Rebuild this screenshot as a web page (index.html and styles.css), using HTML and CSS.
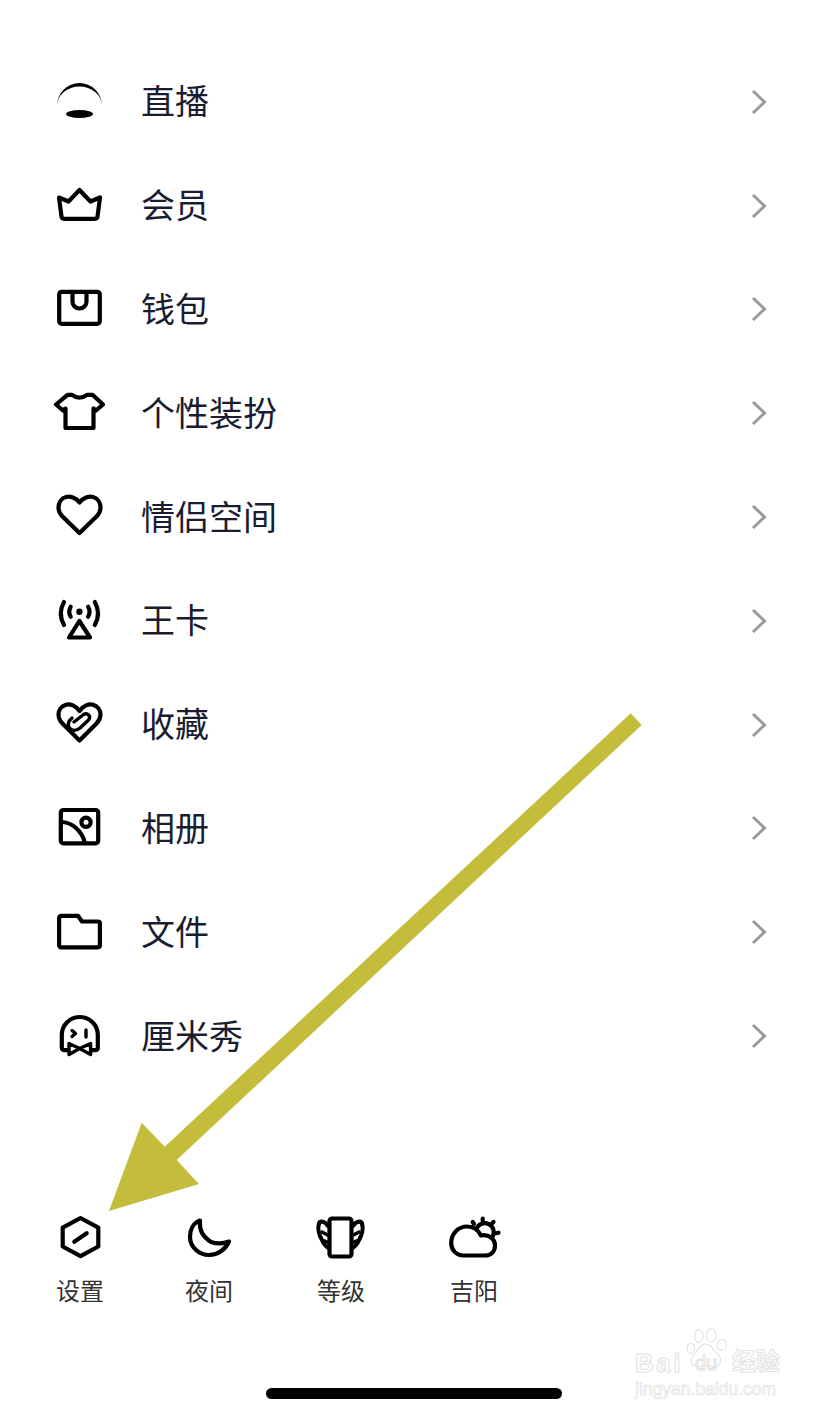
FILE: index.html
```html
<!DOCTYPE html>
<html lang="zh-CN">

<head>
    <meta charset="utf-8">
    <meta name="viewport" content="width=device-width, initial-scale=1.0">
    <title>侧边菜单</title>
    <link rel="stylesheet" href="styles.css">
</head>

<body>
    <div class="page">
        <ul class="menu">
            <li class="row">
                <svg class="icon" viewBox="0 0 48 48"><path class="fill" d="M1.3 27A22.2 22 0 0 1 45.7 27A22.2 18.4 0 0 0 1.3 27Z"/><ellipse class="fill" cx="23.5" cy="36" rx="13.5" ry="4"/></svg>
                <span class="name">直播</span>
                <svg class="more" viewBox="0 0 16 26"><path d="M2 2L13.5 13L2 24"/></svg>
            </li>
            <li class="row">
                <svg class="icon" viewBox="0 0 48 48"><path d="M23.5 8L34.5 19.5L44 15.5L41.5 34.5Q41.2 36.8 39 36.8H8Q5.8 36.8 5.5 34.5L3 15.5L12.5 19.5Z"/></svg>
                <span class="name">会员</span>
                <svg class="more" viewBox="0 0 16 26"><path d="M2 2L13.5 13L2 24"/></svg>
            </li>
            <li class="row">
                <svg class="icon" viewBox="0 0 48 48"><rect x="3.2" y="6.8" width="40.6" height="32" rx="2.5"/><path d="M16.5 7V16.5a7 7 0 0 0 14 0V7"/></svg>
                <span class="name">钱包</span>
                <svg class="more" viewBox="0 0 16 26"><path d="M2 2L13.5 13L2 24"/></svg>
            </li>
            <li class="row">
                <svg class="icon" viewBox="0 0 48 48"><path d="M11.5 5.8H16Q23.5 11.5 31 5.8H36.5L47 15.5L40 21.5L37.5 19.5V39H9.5V19.5L7 21.5L0 15.5Z"/></svg>
                <span class="name">个性装扮</span>
                <svg class="more" viewBox="0 0 16 26"><path d="M2 2L13.5 13L2 24"/></svg>
            </li>
            <li class="row">
                <svg class="icon" viewBox="0 0 48 48"><path d="M23.5 9.5C20 4.5 14 3 10 4C5 5.3 2.5 10 2.5 14.5C2.5 18 4 21 6.5 23.5L23.5 40L40.5 23.5C43 21 44.5 18 44.5 14.5C44.5 10 42 5.3 37 4C33 3 27 4.5 23.5 9.5Z"/></svg>
                <span class="name">情侣空间</span>
                <svg class="more" viewBox="0 0 16 26"><path d="M2 2L13.5 13L2 24"/></svg>
            </li>
            <li class="row">
                <svg class="icon" viewBox="0 0 48 48"><circle class="fill" cx="23.4" cy="14.7" r="3.2"/><path d="M23.4 24L13 40.5H34Z"/><path d="M8 5Q1.5 16.5 8 28M38.8 5Q45.3 16.5 38.8 28M14.7 9.7Q11.8 14.7 14.7 19.7M32.1 9.7Q35 14.7 32.1 19.7"/></svg>
                <span class="name">王卡</span>
                <svg class="more" viewBox="0 0 16 26"><path d="M2 2L13.5 13L2 24"/></svg>
            </li>
            <li class="row">
                <svg class="icon" viewBox="0 0 48 48"><path d="M23.5 10C20 4.5 14 2.5 10 3.7C5 5.2 2.5 9.5 2.5 13.5C2.5 17 4 20 6.5 22.5L23.5 39.5L40.5 22.5C43 20 44.5 17 44.5 13.5C44.5 9.5 42 5.2 37 3.7C33 2.5 27 4.5 23.5 10Z"/><path class="thin" d="M18 21L27.5 13.5C31.5 11 35.5 15.5 32.5 19L24 27C20 30.5 15.5 30 13 26.5C11.5 23.5 12.5 20 16 17"/></svg>
                <span class="name">收藏</span>
                <svg class="more" viewBox="0 0 16 26"><path d="M2 2L13.5 13L2 24"/></svg>
            </li>
            <li class="row">
                <svg class="icon" viewBox="0 0 48 48"><rect x="4.8" y="6" width="37.4" height="33.3" rx="2.5"/><circle cx="30" cy="18.3" r="4.6"/><path d="M5 18C16 18 26 27 29 39"/></svg>
                <span class="name">相册</span>
                <svg class="more" viewBox="0 0 16 26"><path d="M2 2L13.5 13L2 24"/></svg>
            </li>
            <li class="row">
                <svg class="icon" viewBox="0 0 48 48"><path d="M3.1 9.8a2 2 0 0 1 2-2H22L26 13.5H41.9a2 2 0 0 1 2 2V37.3a2 2 0 0 1-2 2H5.1a2 2 0 0 1-2-2Z"/></svg>
                <span class="name">文件</span>
                <svg class="more" viewBox="0 0 16 26"><path d="M2 2L13.5 13L2 24"/></svg>
            </li>
            <li class="row">
                <svg class="icon" viewBox="0 0 48 48"><path d="M11.5 38.2H8.5Q5.8 38.2 5.8 35.5V23a18 18 0 0 1 36 0V35.5Q41.8 38.2 39 38.2H36"/><path class="thin" d="M16 18.5L19.5 21.5L16 24.5"/><path class="thin" d="M30 18V25"/><path class="thin" d="M13 31.5L23.6 36.5L13 42.5ZM34.6 31.5L23.6 36.5L34.6 42.5Z"/></svg>
                <span class="name">厘米秀</span>
                <svg class="more" viewBox="0 0 16 26"><path d="M2 2L13.5 13L2 24"/></svg>
            </li>
        </ul>

        <div class="tools">
            <div class="tool">
                <svg class="icon" viewBox="0 0 48 48"><path d="M24.5 5L42.3 14.7V33.5L24.5 43.2L6.7 33.5V14.7Z"/><path d="M18.3 28.7L30.7 20.3"/></svg>
                <span>设置</span>
            </div>
            <div class="tool">
                <svg class="icon" viewBox="0 0 48 48"><path d="M15 7.5C8 10 5 17 5 24C5 34 14 42 24 42C33 42 41 36 44 28.5C38 31 32 31 26 29C18 24 14 16 15 7.5Z"/></svg>
                <span>夜间</span>
            </div>
            <div class="tool">
                <svg class="icon" viewBox="0 0 48 48"><rect x="12.5" y="5.5" width="22" height="38" rx="2.5"/><path d="M11 13C8 8 3 7.5 2 10.5C0.5 15 2 22 5 27C7 31.5 9.5 34 11.5 35"/><path d="M36 13C39 8 44 7.5 45 10.5C46.5 15 45 22 42 27C40 31.5 37.5 34 35.5 35"/><path class="thin" d="M5 19L10.5 22M8 28L11 29.5M42 19L36.5 22M39 28L36 29.5"/></svg>
                <span>等级</span>
            </div>
            <div class="tool">
                <svg class="icon" viewBox="0 0 48 48"><path d="M14 42.5C6 42.5 1.2 37 1.2 30C1.2 21 8 13.5 17 13.5C23 13.5 28 16.5 31 22.5C39 21 45 26 45 32.5C45 38.5 41 42.5 35 42.5Z"/><path d="M26.5 15.5A8.5 8.5 0 0 1 43 23"/><path d="M22.7 9L24 11M32.7 5.5V7.5M43.5 9L41.5 11M48.5 19.7L46.2 20.2"/></svg>
                <span>吉阳</span>
            </div>
        </div>

        <div class="home-bar"></div>

        <!-- 箭头和水印盖在页面上 -->
        <svg class="arrow" viewBox="0 0 828 1415"><polygon points="109,1211 141.7,1122.7 164.7,1146.7 630.7,713.3 641.7,725 176.7,1160 199,1184"/></svg>

        <div class="mark">
            <svg class="paw" viewBox="0 0 60 60"><ellipse cx="19" cy="11" rx="6" ry="9"/><ellipse cx="36" cy="10" rx="6.5" ry="9"/><ellipse cx="50" cy="23" rx="6.5" ry="7.5"/><ellipse cx="8" cy="28" rx="5" ry="7"/><path d="M28 22C38 22 40 33 46 38C51 43 48 54 38 53C33 52.5 31 51 27 51C22 51 19 54 13 52C6 49 8 41 13 36C18 31 19 22 28 22Z"/></svg>
            <span class="bai">Bai</span>
            <span class="du">du</span>
            <span class="jy">经验</span>
            <span class="url">jingyan.baidu.com</span>
        </div>
    </div>
</body>

</html>
```

FILE: styles.css
```css
body {
    margin: 0;
    background-color: #fff;
    font-family: "Noto Sans CJK SC", "Liberation Sans", sans-serif;
}

.page {
    position: relative;
    width: 828px;
    height: 1415px;
    overflow: hidden;
}

.menu {
    list-style: none;
    margin: 0;
    padding: 50px 61px 0 56px;
}

.row {
    display: flex;
    align-items: center;
    height: 103.8px;
}

.name {
    flex: 1;
    margin-left: 38px;
    padding-bottom: 3px;
    font-size: 34px;
    line-height: 48px;
    color: #1a1c30;
    text-indent: -1px;
}

.icon {
    flex: none;
    width: 48px;
    height: 48px;
    overflow: visible;
    fill: none;
    stroke: #000;
    stroke-width: 4.2;
    stroke-linejoin: round;
    stroke-linecap: round;
}

.icon .fill {
    fill: #000;
    stroke: none;
}

.icon .thin {
    stroke-width: 3.4;
}

.more {
    width: 16px;
    height: 26px;
    fill: none;
    stroke: #999;
    stroke-width: 3;
}

.tools {
    display: grid;
    grid-template-columns: 129px 132px 133px 48px;
    margin-top: 125px;
    padding-left: 56px;
}

.tool {
    display: flex;
    flex-direction: column;
    align-items: flex-start;
    font-size: 24px;
    line-height: 32px;
    color: #333;
}

.tool span {
    margin-top: 13px;
}

.home-bar {
    width: 296px;
    height: 11px;
    margin: 82px auto 0;
    border-radius: 6px;
    background-color: #000;
}

.arrow {
    position: absolute;
    top: 0;
    left: 0;
    width: 828px;
    height: 1415px;
    fill: #c4bd3c;
}

.mark {
    position: absolute;
    top: 1325px;
    left: 635px;
    width: 150px;
    height: 75px;
    color: transparent;
    -webkit-text-stroke: 1px #e2e2e2;
    font-family: "Liberation Sans", sans-serif;
}

.mark span {
    position: absolute;
}

.paw {
    position: absolute;
    top: 2px;
    left: 50px;
    width: 44px;
    height: 46px;
    fill: #fff;
    stroke: #e2e2e2;
    stroke-width: 1.5;
}

.bai {
    top: 23px;
    left: 0;
    font-size: 26px;
    font-weight: bold;
    line-height: 30px;
    letter-spacing: 2.5px;
}

.du {
    top: 27px;
    left: 60px;
    font-size: 20px;
    line-height: 22px;
}

.jy {
    top: 21px;
    left: 97px;
    font-family: "Noto Sans CJK SC", sans-serif;
    font-size: 24px;
    font-weight: bold;
    line-height: 28px;
}

.url {
    top: 54px;
    left: 0;
    font-size: 17.5px;
    line-height: 20px;
    white-space: nowrap;
    -webkit-text-stroke-width: 0.7px;
}
```
